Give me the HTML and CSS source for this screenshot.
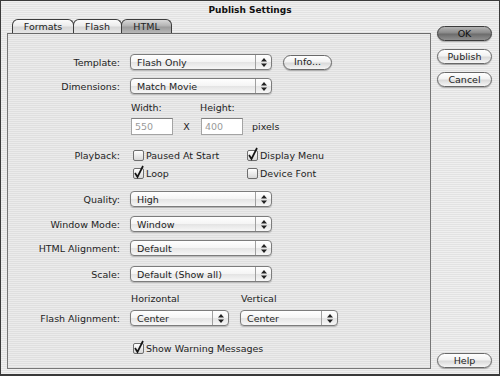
FILE: index.html
```html
<!DOCTYPE html>
<html lang="en">
<head>
    <meta charset="UTF-8">
    <title>Publish Settings</title>
    <link rel="stylesheet" href="styles.css">
</head>
<body>
    <div class="window">
        <div class="titlebar">Publish Settings</div>
        <div class="content">
            <div class="main">
                <div class="tabs">
                    <div class="tab tab-formats">Formats</div>
                    <div class="tab tab-flash">Flash</div>
                    <div class="tab tab-html active">HTML</div>
                </div>
                <div class="panel">
                    <div class="row first">
                        <div class="lbl">Template:</div>
                        <div class="popup"><span>Flash Only</span><i class="arrows"><svg width="6" height="9" viewBox="0 0 6 9"><path d="M3 0 L6 3.5 H0 Z M0 5.5 H6 L3 9 Z" fill="#222"/></svg></i></div>
                        <button class="btn info">Info...</button>
                    </div>
                    <div class="row">
                        <div class="lbl">Dimensions:</div>
                        <div class="popup"><span>Match Movie</span><i class="arrows"><svg width="6" height="9" viewBox="0 0 6 9"><path d="M3 0 L6 3.5 H0 Z M0 5.5 H6 L3 9 Z" fill="#222"/></svg></i></div>
                    </div>
                    <div class="row sub sub-size">
                        <div class="lbl"></div>
                        <div class="sub-w">Width:</div>
                        <div>Height:</div>
                    </div>
                    <div class="row tight">
                        <div class="lbl"></div>
                        <div class="field">550</div>
                        <div class="times">X</div>
                        <div class="field">400</div>
                        <div class="unit">pixels</div>
                    </div>
                    <div class="row wide">
                        <div class="lbl">Playback:</div>
                        <div class="check col1"><span class="box"></span>Paused At Start</div>
                        <div class="check"><span class="box on"><svg width="12" height="14" viewBox="0 0 12 14"><path d="M2 8 L4.5 12 L10 1" fill="none" stroke="#151515" stroke-width="1.7"/></svg></span>Display Menu</div>
                    </div>
                    <div class="row none">
                        <div class="lbl"></div>
                        <div class="check col1"><span class="box on"><svg width="12" height="14" viewBox="0 0 12 14"><path d="M2 8 L4.5 12 L10 1" fill="none" stroke="#151515" stroke-width="1.7"/></svg></span>Loop</div>
                        <div class="check"><span class="box"></span>Device Font</div>
                    </div>
                    <div class="row gap8">
                        <div class="lbl">Quality:</div>
                        <div class="popup"><span>High</span><i class="arrows"><svg width="6" height="9" viewBox="0 0 6 9"><path d="M3 0 L6 3.5 H0 Z M0 5.5 H6 L3 9 Z" fill="#222"/></svg></i></div>
                    </div>
                    <div class="row gap7">
                        <div class="lbl">Window Mode:</div>
                        <div class="popup"><span>Window</span><i class="arrows"><svg width="6" height="9" viewBox="0 0 6 9"><path d="M3 0 L6 3.5 H0 Z M0 5.5 H6 L3 9 Z" fill="#222"/></svg></i></div>
                    </div>
                    <div class="row">
                        <div class="lbl">HTML Alignment:</div>
                        <div class="popup"><span>Default</span><i class="arrows"><svg width="6" height="9" viewBox="0 0 6 9"><path d="M3 0 L6 3.5 H0 Z M0 5.5 H6 L3 9 Z" fill="#222"/></svg></i></div>
                    </div>
                    <div class="row gap8">
                        <div class="lbl">Scale:</div>
                        <div class="popup"><span>Default (Show all)</span><i class="arrows"><svg width="6" height="9" viewBox="0 0 6 9"><path d="M3 0 L6 3.5 H0 Z M0 5.5 H6 L3 9 Z" fill="#222"/></svg></i></div>
                    </div>
                    <div class="row sub gap8">
                        <div class="lbl"></div>
                        <div class="sub-h">Horizontal</div>
                        <div>Vertical</div>
                    </div>
                    <div class="row gap4">
                        <div class="lbl">Flash Alignment:</div>
                        <div class="popup small"><span>Center</span><i class="arrows"><svg width="6" height="9" viewBox="0 0 6 9"><path d="M3 0 L6 3.5 H0 Z M0 5.5 H6 L3 9 Z" fill="#222"/></svg></i></div>
                        <div class="popup small second"><span>Center</span><i class="arrows"><svg width="6" height="9" viewBox="0 0 6 9"><path d="M3 0 L6 3.5 H0 Z M0 5.5 H6 L3 9 Z" fill="#222"/></svg></i></div>
                    </div>
                    <div class="row gap12">
                        <div class="lbl"></div>
                        <div class="check col1"><span class="box on"><svg width="12" height="14" viewBox="0 0 12 14"><path d="M2 8 L4.5 12 L10 1" fill="none" stroke="#151515" stroke-width="1.7"/></svg></span>Show Warning Messages</div>
                    </div>
                </div>
            </div>
            <div class="side">
                <button class="btn default">OK</button>
                <button class="btn">Publish</button>
                <button class="btn">Cancel</button>
                <button class="btn help">Help</button>
            </div>
        </div>
    </div>
</body>
</html>
```

FILE: styles.css
```css
body {
    margin: 0;
    font-family: "DejaVu Sans", Verdana, sans-serif;
    font-size: 9.5px;
    color: #1e1e1e;
}
.window {
    width: 500px;
    height: 376px;
    box-sizing: border-box;
    border: 1px solid #3a3a3a;
    border-bottom-width: 2px;
    background: repeating-linear-gradient(to bottom, #efefef 0, #efefef 1px, #e2e2e2 1px, #e2e2e2 2px);
    display: flex;
    flex-direction: column;
}
.titlebar {
    height: 18px;
    line-height: 19px;
    text-align: center;
    font-weight: bold;
    font-size: 9px;
    color: #111;
}
.content {
    flex: 1;
    display: flex;
}
.main {
    width: 430px;
    padding-left: 6px;
    box-sizing: border-box;
}
.tabs {
    display: flex;
    height: 14px;
    padding-left: 5px;
}
.tab {
    height: 14px;
    box-sizing: border-box;
    border: 1px solid #3c3c3c;
    border-bottom: none;
    border-radius: 6px 6px 0 0;
    background: linear-gradient(#fbfbfb, #ececec 45%, #d6d6d6 55%, #e6e6e6);
    text-align: center;
    line-height: 13px;
    color: #222;
}
.tab-formats { width: 62px; }
.tab-flash { width: 49px; margin-left: -1px; }
.tab-html { width: 51px; margin-left: -1px; }
.tab.active {
    background: linear-gradient(#d8d8d8, #b4b4b4 45%, #9c9c9c 55%, #b8b8b8);
}
.panel {
    height: 336px;
    box-sizing: border-box;
    border: 1px solid #767676;
    border-top-color: #6a6a6a;
    padding-top: 19px;
    background: repeating-linear-gradient(to bottom, #ebebeb 0, #ebebeb 1px, #dfdfdf 1px, #dfdfdf 2px);
}
.row {
    display: flex;
    align-items: center;
    height: 18px;
    margin-top: 6px;
    white-space: nowrap;
}
.row.first { margin-top: 0; }
.row.sub { height: 14px; margin-top: 5px; }
.row.tight { margin-top: 3px; }
.row.wide { margin-top: 11px; }
.row.none { margin-top: 0; }
.row.gap4 { margin-top: 4px; }
.row.gap7 { margin-top: 7px; }
.row.gap8 { margin-top: 8px; }
.row.gap12 { margin-top: 12px; }
.lbl {
    width: 112px;
    margin-right: 10px;
    text-align: right;
    flex: none;
}
.popup {
    width: 142px;
    height: 16px;
    box-sizing: border-box;
    border: 1px solid #7c7c7c;
    border-radius: 4px;
    background: linear-gradient(#ffffff, #f4f4f4 50%, #e4e4e4 52%, #f7f7f7);
    box-shadow: 0 1px 1px rgba(0, 0, 0, 0.22);
    display: flex;
    align-items: center;
}
.popup span {
    flex: 1;
    padding-left: 6px;
}
.popup .arrows {
    width: 15px;
    height: 100%;
    border-left: 1px solid #a0a0a0;
    display: flex;
    align-items: center;
    justify-content: center;
}
.popup.small { width: 99px; }
.popup.second { width: 98px; margin-left: 11px; }
.btn {
    width: 55px;
    height: 15px;
    padding: 0;
    box-sizing: border-box;
    border: 1px solid #686868;
    border-radius: 8px;
    background: linear-gradient(#ffffff, #f2f2f2 45%, #dadada 55%, #f6f6f6);
    box-shadow: 0 1px 1px rgba(0, 0, 0, 0.28);
    font: inherit;
    color: #1e1e1e;
    line-height: 12px;
}
.btn.info {
    width: 49px;
    margin-left: 11px;
}
.btn.default {
    border-color: #3c3c3c;
    background: linear-gradient(#b4b4b4, #8a8a8a 45%, #6c6c6c 55%, #909090);
    color: #111;
}
.side {
    flex: 1;
    display: flex;
    flex-direction: column;
    padding: 7px 0 6px 6px;
}
.side .btn + .btn { margin-top: 8px; }
.side .btn.help { margin-top: auto; }
.sub-w { width: 69px; padding-left: 1px; }
.sub-h { width: 110px; padding-left: 1px; }
.field {
    width: 42px;
    height: 17px;
    box-sizing: border-box;
    border: 1px solid #a4a4a4;
    border-top-color: #808080;
    background: #fff;
    color: #9a9a9a;
    padding-left: 3px;
    line-height: 15px;
    margin-left: 1px;
}
.times {
    width: 27px;
    text-align: center;
}
.unit { margin-left: 9px; }
.check {
    display: flex;
    align-items: center;
}
.check.col1 {
    min-width: 114px;
    margin-left: 3px;
}
.box {
    position: relative;
    width: 11px;
    height: 11px;
    box-sizing: border-box;
    border: 1px solid #6e6e6e;
    border-radius: 2px;
    background: linear-gradient(#ffffff, #d8d8d8);
    margin-right: 2px;
    flex: none;
}
.box svg {
    position: absolute;
    left: -1px;
    top: -4px;
}
```
